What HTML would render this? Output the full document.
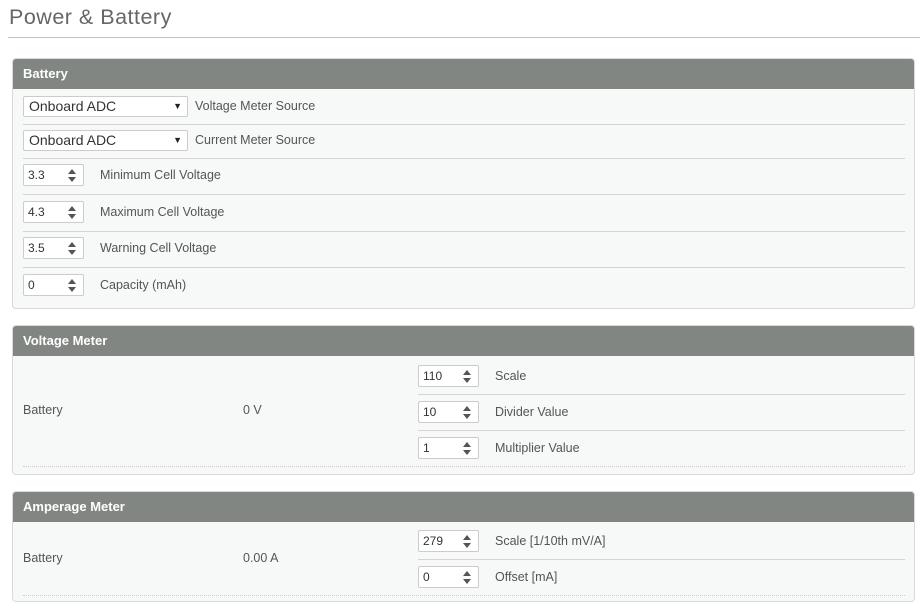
<!DOCTYPE html>
<html><head><meta charset="utf-8"><style>
*{box-sizing:border-box;margin:0;padding:0}
body{width:920px;height:611px;background:#fff;font-family:"Liberation Sans",sans-serif;position:relative;overflow:hidden;color:#555}
.a{position:absolute}
.title{left:9px;top:5px;font-size:21.5px;color:#666;font-weight:normal;letter-spacing:0.5px}
.yl{left:8px;top:37px;width:912px;height:1px;background:#e0cf2a}
.panel{position:absolute;left:12px;width:903px;background:#f7f8f8;border:1px solid #d9d9d9;border-radius:4px;overflow:hidden}
.hd{height:30px;background:#818683;color:#fff;font-weight:bold;font-size:13px;padding:7px 0 0 10px}
.sep{position:absolute;height:1px;background:#d4d4d4}
.dot{position:absolute;height:1px;border-top:1px dotted #ccc}
.sel{position:absolute;width:165px;height:21px;background:#fff;border:1px solid #ccc;border-radius:2px;font-size:14px;color:#333;padding:1px 0 0 5px}
.sel:after{content:"▼";position:absolute;right:5px;top:4px;font-size:9px;color:#222}
.in{position:absolute;width:61px;height:22px;background:#fff;border:1px solid #ccc;border-radius:2px;font-size:12px;color:#333;padding:3px 0 0 4px}
.in:after{content:"";position:absolute;right:7px;top:4px;border:4px solid transparent;border-bottom:5px solid #555;border-top:0}
.in:before{content:"";position:absolute;right:7px;top:12px;border:4px solid transparent;border-top:5px solid #555;border-bottom:0}
.lb{position:absolute;font-size:12.5px;color:#555}
</style></head><body>
<div class="a title">Power &amp; Battery</div>
<div class="a yl"></div>

<div class="panel" style="top:58px;height:251px">
  <div class="hd">Battery</div>
  <div class="sel" style="left:10px;top:37px">Onboard ADC</div><div class="lb" style="left:182px;top:40px">Voltage Meter Source</div>
  <div class="sep" style="left:10px;top:65px;width:882px"></div>
  <div class="sel" style="left:10px;top:71px">Onboard ADC</div><div class="lb" style="left:182px;top:74px">Current Meter Source</div>
  <div class="sep" style="left:10px;top:99px;width:882px"></div>
  <div class="in" style="left:10px;top:105px">3.3</div><div class="lb" style="left:87px;top:109px">Minimum Cell Voltage</div>
  <div class="sep" style="left:10px;top:135px;width:882px"></div>
  <div class="in" style="left:10px;top:142px">4.3</div><div class="lb" style="left:87px;top:146px">Maximum Cell Voltage</div>
  <div class="sep" style="left:10px;top:172px;width:882px"></div>
  <div class="in" style="left:10px;top:178px">3.5</div><div class="lb" style="left:87px;top:182px">Warning Cell Voltage</div>
  <div class="sep" style="left:10px;top:208px;width:882px"></div>
  <div class="in" style="left:10px;top:215px">0</div><div class="lb" style="left:87px;top:219px">Capacity (mAh)</div>
</div>

<div class="panel" style="top:325px;height:150px">
  <div class="hd">Voltage Meter</div>
  <div class="lb" style="left:10px;top:77px">Battery</div>
  <div class="lb" style="left:230px;top:77px">0 V</div>
  <div class="in" style="left:405px;top:39px">110</div><div class="lb" style="left:482px;top:43px">Scale</div>
  <div class="sep" style="left:405px;top:68px;width:487px"></div>
  <div class="in" style="left:405px;top:75px">10</div><div class="lb" style="left:482px;top:79px">Divider Value</div>
  <div class="sep" style="left:405px;top:104px;width:487px"></div>
  <div class="in" style="left:405px;top:111px">1</div><div class="lb" style="left:482px;top:115px">Multiplier Value</div>
  <div class="dot" style="left:10px;top:140px;width:882px"></div>
</div>

<div class="panel" style="top:491px;height:111px">
  <div class="hd">Amperage Meter</div>
  <div class="lb" style="left:10px;top:59px">Battery</div>
  <div class="lb" style="left:230px;top:59px">0.00 A</div>
  <div class="in" style="left:405px;top:38px">279</div><div class="lb" style="left:482px;top:42px">Scale [1/10th mV/A]</div>
  <div class="sep" style="left:405px;top:67px;width:487px"></div>
  <div class="in" style="left:405px;top:74px">0</div><div class="lb" style="left:482px;top:78px">Offset [mA]</div>
  <div class="dot" style="left:10px;top:103px;width:882px"></div>
</div>
</body></html>
